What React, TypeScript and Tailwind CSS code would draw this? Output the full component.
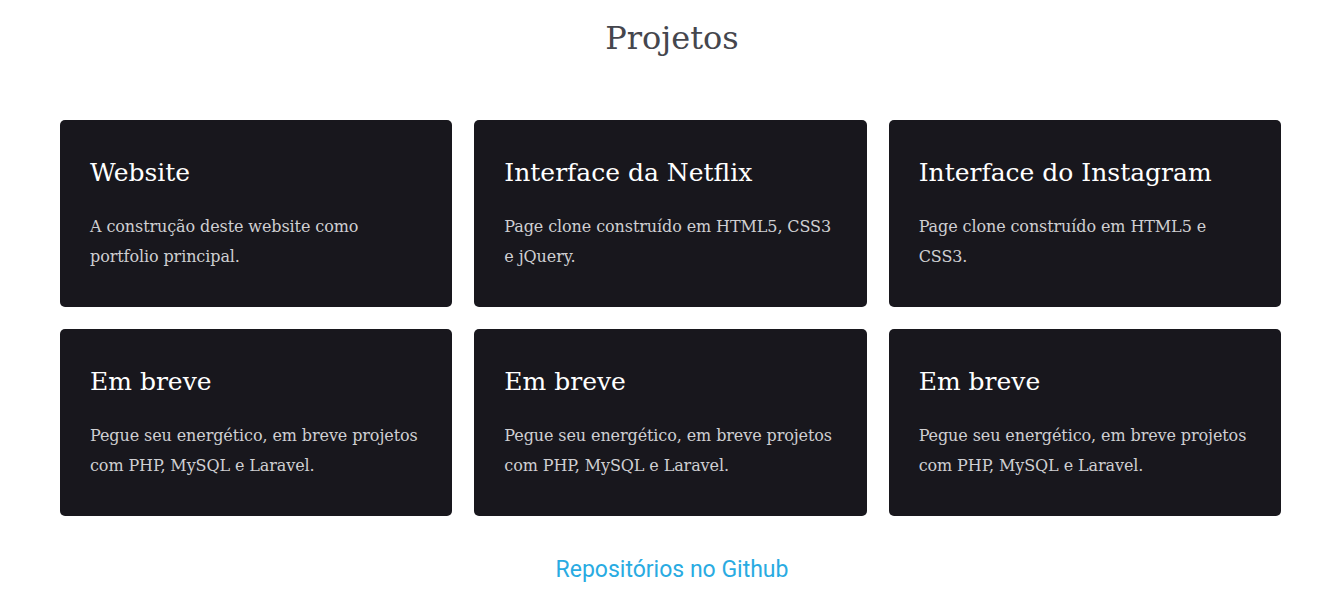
const projects = [
  { title: 'Website', text: 'A construção deste website como portfolio principal.' },
  { title: 'Interface da Netflix', text: 'Page clone construído em HTML5, CSS3 e jQuery.' },
  { title: 'Interface do Instagram', text: 'Page clone construído em HTML5 e CSS3.' },
  { title: 'Em breve', text: 'Pegue seu energético, em breve projetos com PHP, MySQL e Laravel.' },
  { title: 'Em breve', text: 'Pegue seu energético, em breve projetos com PHP, MySQL e Laravel.' },
  { title: 'Em breve', text: 'Pegue seu energético, em breve projetos com PHP, MySQL e Laravel.' },
];

export default function App() {
  return (
    <section className="bg-white min-h-[600px] pt-[14px] font-['Roboto_Slab','DejaVu_Serif',serif]">
      <h2 className="text-center text-[32px] leading-[48px] text-[#45464d]">Projetos</h2>
      <div className="ml-[60px] w-[1221px] mt-[58px] grid grid-cols-3 gap-[22px]">
        {projects.map((p, i) => (
          <div key={i} className="bg-[#18171d] rounded-[5px] h-[187px] px-[30px] pt-[38px]">
            <h3 className="text-white text-[25px] leading-[30px]">{p.title}</h3>
            <p className="mt-[24px] text-[#cfcfd2] text-[16px] tracking-[-0.1px] leading-[30px]">{p.text}</p>
          </div>
        ))}
      </div>
      <div className="text-center mt-[37px]">
        <a href="#" className="font-['Roboto',sans-serif] text-[23px] text-[#29abe2]">
          Repositórios no Github
        </a>
      </div>
    </section>
  );
}
